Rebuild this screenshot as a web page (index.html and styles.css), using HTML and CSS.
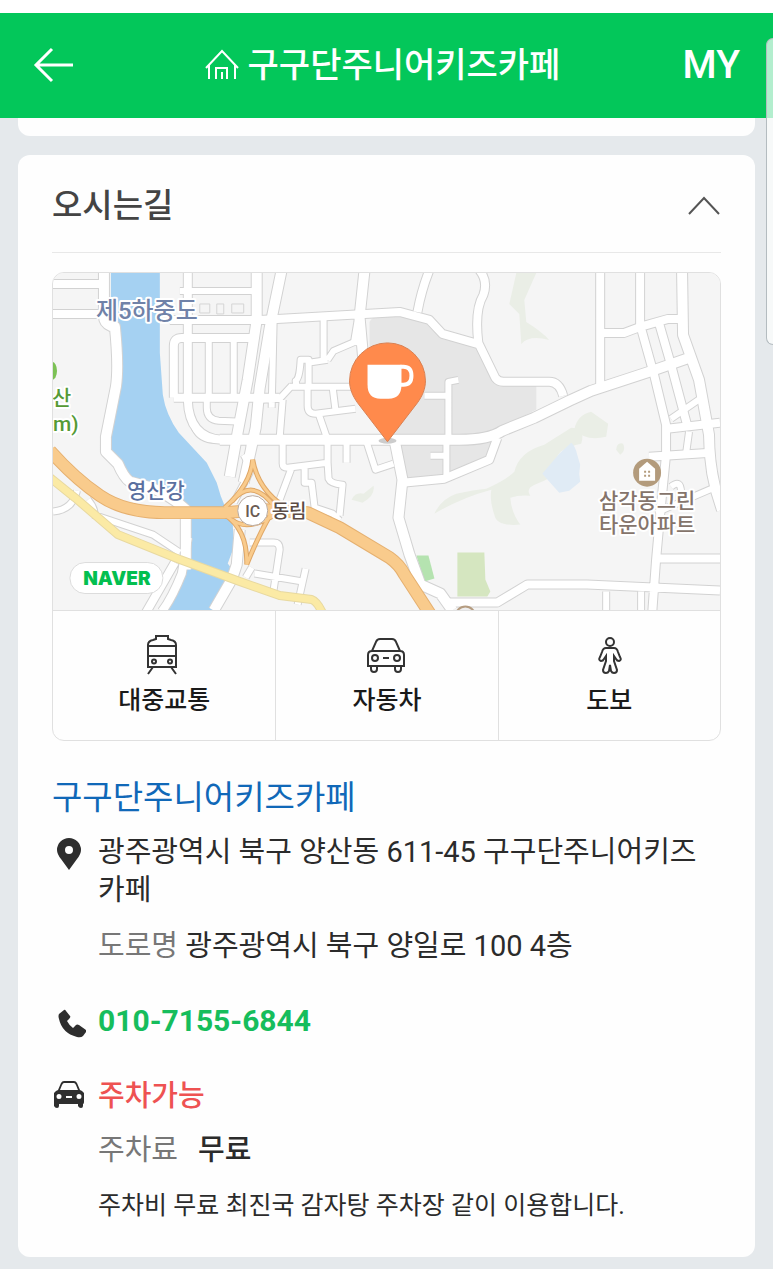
FILE: index.html
```html
<!DOCTYPE html>
<html lang="ko">
<head>
    <meta charset="UTF-8">
    <meta name="viewport" content="width=device-width, initial-scale=1.0">
    <title>구구단주니어키즈카페</title>
    <link rel="stylesheet" href="styles.css">
</head>
<body>
    <header class="top-bar">
        <button class="icon-button back-button" aria-label="뒤로">
            <svg width="42" height="38" viewBox="0 0 42 38"><path d="M19 3 3 19l16 16M3 19h37"/></svg>
        </button>
        <h1 class="top-title">
            <svg width="34" height="32" viewBox="0 0 34 32"><path d="M1 19 17 2l16 17M4 16v14M30 16v14M11 30V19h11v11M17 30v-7"/></svg>
            <span>구구단주니어키즈카페</span>
        </h1>
        <a class="my-link" href="#">MY</a>
    </header>
    <div class="edge-panel"></div>

    <main class="page">
        <section class="card card-previous"></section>

        <section class="card">
            <div class="card-head">
                <h2>오시는길</h2>
                <button class="icon-button toggle-button" aria-label="접기">
                    <svg width="34" height="20" viewBox="0 0 34 20"><path d="M2 18 17 2l15 16"/></svg>
                </button>
            </div>

            <div class="map-box">
                <svg class="map" viewBox="53 273 668 338" role="img" aria-label="지도">
                    <defs>
                        <path id="roads-small" d="M209 338v60M234 338v60M207 398v10q0 12 12 13l24 1M324 318v42M297 387l-1-6q4-2 5-21h8v28M328 360l-20 3M328 360l6-9 28-12M290 387h65M308 386v20q0 8 8 8l40-5M333 387l3 24M319 414l9 26M283 400l-3 38M262 400l18-1 12-13M425 396h24M449 440v-58l10-2M447 440v39M431 456h16M367 442l9 28 18-6M347 442v21M283 442v22q0 4 5 4l40-5v-20M292 468l-12 32M305 467v16h7l3 25 18 6 7 7M328 463l1 16q2 5 14 6l-3 31M250 543h24q6 0 6 7l-6 40M255 574l48 8M306 569l-8 36M607 592v20M642 592v20M715 488l-58 25M672 419l32-22M250 443v30l-16 30M244 455l8 15M274 320l-2 88M230 440h-12q-17 1-23-12M53 512q20-2 24-21M88 500q7 8 7 17M93 515l60 20 27 18M246 578l6-10M180 291h80M690 432l-3 22M672 487q10-8 10 6"/>
                        <path id="roads-mid" d="M53 284h50M53 314h52M174 398v-52q0-8 8-8h72M170 320h100M174 398h106M188 270v130q1 38 34 40M430 270q-8 20-12 42M260 320l70-4 70-4 30 8 13 14 35 10M480 270q9 11 4 25-9 15-5 48l17 35q3 4 8 4h46q10 0 14 14M601 270v120M641 270v57M601 333h24l16-6 28-8h15M641 325l14 50 12 50v30l-5 50-5 55-4 55M659 320l13 45 16 60M668 429l53-6M650 457l62-4M657 559h66M403 483l42-4 45-19 8-22M450 603h48l30-18h60l133 6M355 345l5-30M175 563l-30 52M188 538l-6 36q-10 25-20 38"/>
                        <path id="roads-wide" d="M104 270v46q0 7 7 10l4 1q4 40 1 60-4 20-10 50v15l12 12q6 14 12 18l22 6q22 10 34 22v60M282 270l-12 58-10 60-4 40-12 55M257 270v50l-9 60-10 52-8 45M365 270l-5 47 4 45M220 440h240q30 0 43-9l32-13 35-17 22-10 58-19 40-14M395 440l8 40-4 38 11 37 11 30 20 9 12 17M683 270l1 65 16 45 10 55q0 40 13 75M240 530l-3 35-5 15-18 31"/>
                        <path id="highway" d="M50 451q25 28 50 45t65 17h60l40-3 43 3 32 15 50 30q10 7 15 17l26 40"/>
                        <path id="ramps" d="M253 460q-2 25-28 48M253 460q5 30 33 48M247 565q1-35-22-50M247 565q12-30 25-52M232 502q20-25 42 4M232 520q15 12 42-4"/>
                    </defs>

                    <rect class="land" x="53" y="273" width="668" height="338"/>
                    <path class="campus" d="M370 322q2-5 10-6l22-3 26 8 15 18 34 7 20 35 8 4h32v25l-34 17q-5 40-58 50l-38 4-10-40-27-60z"/>
                    <g class="hill">
                        <path d="M517 273h20l-12 27 2 22q16 10 23 18-20-5-28 4l-2-30-10-10z"/>
                        <path d="M435 514q7-15 22-20 18-4 30-5 20-9 28-17 5-20 30-27l27-17q15 0 10 16-23 5-24 14 3 18-18 25-15 5-9 13-11-1-20 2 1 15 10 27-24 2-26-10-5-14-3-25-30 8-57 24z"/>
                        <path d="M575 430q3-15 17-18l17 12-2 13q-20 5-32-7zM617 450q1-8 7-6 3 7-3 11zM352 500q4-8 12-6l10-8q2 10-11 17z"/>
                    </g>
                    <path class="pond" d="M543 474l17-20 12-11q4 3 6 12l3 10-1 9 1 8-11 9-10 2z"/>
                    <path class="grass" d="M458 553h27l1 27 5 12-3 5h-30z"/>
                    <path class="grass-bright" d="M417 556h12l6 23-10 3z"/>
                    <path class="river" d="M111 273h49v80l3 42q3 20 16 38l28 30 10 20q5 20 16 40l1 25-6 16 10 13-22 34h-56q25-32 25-65v-35q-18-22-38-26l-18-8-12-16-11-10 12-55q2-35-7-73z"/>

                    <g class="casing">
                        <use href="#roads-small" class="small"/>
                        <use href="#roads-mid" class="mid"/>
                        <use href="#roads-wide" class="wide"/>
                    </g>
                    <g class="surface">
                        <use href="#roads-small" class="small"/>
                        <use href="#roads-mid" class="mid"/>
                        <use href="#roads-wide" class="wide"/>
                    </g>
                    <path class="blocks" d="M200 304h10v9h-10zM217 304h7v10h-7zM232 304h12v9h-12z"/>

                    <path class="yellow-casing" d="M50 478l25 20 43 37 62 25 60 22 40 14 32 4q6 2 12 16"/>
                    <path class="yellow" d="M50 478l25 20 43 37 62 25 60 22 40 14 32 4q6 2 12 16"/>
                    <use href="#ramps" class="ramp-casing"/>
                    <use href="#highway" class="highway-casing"/>
                    <use href="#ramps" class="ramp"/>
                    <use href="#highway" class="highway"/>
                    <circle class="exit-mark" cx="466" cy="617" r="10"/>

                    <text class="place river-name large" x="96" y="319">제5하중도</text>
                    <text class="place river-name" x="127" y="498">영산강</text>
                    <ellipse class="spot" cx="52" cy="371" rx="5" ry="9"/>
                    <text class="place park-name" x="52" y="405">산</text>
                    <text class="place park-name" x="53" y="431">m)</text>

                    <circle class="ic-badge" cx="253" cy="511" r="15"/>
                    <text class="ic-text" x="253" y="517" text-anchor="middle">IC</text>
                    <text class="place ic-name" x="272" y="518">동림</text>

                    <circle class="apt-badge" cx="648" cy="473" r="14"/>
                    <path class="apt-house" d="M640 481v-12l8-7 8 7v12z"/>
                    <path class="apt-window" d="M645 471h2v2h-2zM649 471h2v2h-2zM645 475h2v2h-2zM649 475h2v2h-2z"/>
                    <text class="place apt-name" x="648" y="508" text-anchor="middle">삼각동그린</text>
                    <text class="place apt-name" x="648" y="532" text-anchor="middle">타운아파트</text>

                    <ellipse class="pin-shadow" cx="388" cy="441" rx="9" ry="3"/>
                    <path class="pin" d="M388 442l-30-39c-5-7-8-14-8-22a38 38 0 0 1 76 0c0 8-3 15-8 22z"/>
                    <path class="cup" d="M368 365h34v20q0 14-13 14h-8q-13 0-13-14z"/>
                    <path class="cup-handle" d="M401 367h3q8 0 8 9t-8 9h-3"/>

                    <rect class="naver-pill" x="70" y="563" width="93" height="31" rx="15"/>
                    <text class="naver-text" x="117" y="585" text-anchor="middle">NAVER</text>
                </svg>

                <div class="routes">
                    <button class="route">
                        <svg width="40" height="40" viewBox="2 0 40 40"><path d="M6 32V10q0-4 5-5l3-1V1h12v3l3 1q5 1 5 5v22zM6 11h28M6 21h28M11 32l-5 7M29 32l5 7"/><circle cx="12" cy="26.500" r="2"/><circle cx="28" cy="26.500" r="2"/></svg>
                        <span>대중교통</span>
                    </button>
                    <button class="route">
                        <svg width="40" height="40" viewBox="1 0 40 40"><path d="M2 31V20q0-4 4-4l4-9q1-3 4-3h12q3 0 4 3l4 9q4 0 4 4v11zM6 16h28M5 31v3q0 3 3 3t3-3v-3M29 31v3q0 3 3 3t3-3v-3M17 23h6"/><circle cx="9" cy="23" r="3"/><circle cx="31" cy="23" r="3"/></svg>
                        <span>자동차</span>
                    </button>
                    <button class="route">
                        <svg width="40" height="40" viewBox="-1 0 40 40"><circle cx="20" cy="7" r="4"/><path d="M16 13h8q3 0 4 4l2 5q2 3-1 4-2 0-3-2l-2-3v5l3 9q0 3-3 3-2 0-3-2l-1-6-1 6q-1 2-3 2-3 0-3-3l3-9v-5l-2 3q-1 2-3 2-3-1-1-4l2-5q1-4 4-4z"/></svg>
                        <span>도보</span>
                    </button>
                </div>
            </div>

            <h3 class="place-title"><a href="#">구구단주니어키즈카페</a></h3>

            <div class="info-row">
                <svg class="info-icon" width="34" height="38" viewBox="0 0 34 38"><path fill-rule="evenodd" d="M17 37 9 26q-4-5-4-9a12 12 0 0 1 24 0q0 4-4 9zM17 13a4 4 0 1 0 0 8 4 4 0 0 0 0-8z"/></svg>
                <div>
                    <p>광주광역시 북구 양산동 611-45 구구단주니어키즈카페</p>
                    <p class="road-address"><span class="label">도로명</span> 광주광역시 북구 양일로 100 4층</p>
                </div>
            </div>

            <div class="info-row">
                <svg class="info-icon" width="34" height="38" viewBox="0 0 34 38"><path d="M7 12l5-4q1-1 2 1l4 5q1 1-1 3l-2 2q2 4 6 7l3-3q1-1 3 0l7 5q1 1 0 2l-3 4q-2 2-6 1Q10 31 7 17q-1-3 0-5z"/></svg>
                <a class="phone" href="tel:010-7155-6844">010-7155-6844</a>
            </div>

            <div class="info-row">
                <svg class="info-icon" width="34" height="38" viewBox="0 0 34 38"><path fill-rule="evenodd" d="M2 16l2-2 2-1 3-7q1-2 3-2h10q2 0 3 2l3 7 2 1 2 2v9q0 2-1 2v2q0 2-2 2t-3-2v-2H7v2q0 2-2 2t-3-2v-2q0 0 0-2zM8 13h18l-2-5q-1-2-2-2H12q-1 0-2 2zM7 17a2 2 0 1 0 0 5 2 2 0 0 0 0-5zM27 17a2 2 0 1 0 0 5 2 2 0 0 0 0-5zM14 19v2h6v-2z"/></svg>
                <div>
                    <p class="parking">주차가능</p>
                    <p class="fee"><span class="label">주차료</span><span class="fee-value">무료</span></p>
                    <p class="note">주차비 무료 최진국 감자탕 주차장 같이 이용합니다.</p>
                </div>
            </div>
        </section>
    </main>
</body>
</html>
```
FILE: styles.css
```css
* {
    box-sizing: border-box;
}
body {
    margin: 0;
    padding-top: 13px;
    background-color: #fff;
    color: #2b2b2b;
    font-family: Roboto, "Noto Sans CJK KR", sans-serif;
    font-size: 29px;
    line-height: 38px;
}
h1, h2, h3, p {
    margin: 0;
}
a {
    color: inherit;
    text-decoration: none;
}
button {
    border: none;
    background: none;
    padding: 0;
    color: inherit;
    font-family: inherit;
    cursor: pointer;
}
svg {
    display: block;
}

/* header */
.top-bar {
    display: grid;
    grid-template-columns: 1fr auto 1fr;
    align-items: center;
    height: 105px;
    padding: 0 33px 2px;
    background-color: #03c75a;
    color: #fff;
}
.top-bar path {
    fill: none;
    stroke: #fff;
    stroke-width: 3;
}
.icon-button {
    justify-self: start;
}
.top-title {
    display: flex;
    align-items: center;
    gap: 9px;
    padding-right: 8px;
    font-size: 34px;
    font-weight: 500;
}
.top-title path {
    stroke-width: 2;
}
.my-link {
    justify-self: end;
    font-size: 39px;
    font-weight: 500;
}
.edge-panel {
    position: absolute;
    top: 38px;
    right: 0;
    width: 7px;
    height: 307px;
    border: 1px solid #b4bcc0;
    border-right: none;
    border-radius: 8px 0 0 8px;
    background-color: rgba(255, 255, 255, 0.7);
}

/* cards */
.page {
    padding: 0 18px 13px;
    background-color: #e5e9ec;
}
.card {
    padding: 0 34px 32px;
    border-radius: 12px;
    background-color: #fefefe;
}
.card-previous {
    height: 18px;
    margin-bottom: 19px;
    padding: 0;
    border-radius: 0 0 12px 12px;
}
.card-head {
    display: flex;
    justify-content: space-between;
    align-items: center;
    padding: 32px 0 27px;
    border-bottom: 1px solid #e8e8e8;
}
.card-head h2 {
    color: #444;
    font-size: 33px;
    font-weight: 500;
}
.toggle-button path {
    fill: none;
    stroke: #555;
    stroke-width: 2;
}

/* map */
.map-box {
    margin-top: 19px;
    border: 1px solid #e0e0e0;
    border-radius: 12px;
    overflow: hidden;
}
.map {
    width: 100%;
    height: auto;
}
.land { fill: #f5f5f5; }
.campus { fill: #e6e6e6; }
.hill { fill: #eaeee6; }
.pond { fill: #e0ebf5; }
.grass { fill: #d5e6c0; }
.grass-bright { fill: #b5e3b0; }
.river { fill: #a5d1f2; }
.casing, .surface {
    fill: none;
    stroke-linejoin: round;
}
.casing { stroke: #d2d2d2; }
.surface { stroke: #fff; }
.casing .small { stroke-width: 8; }
.surface .small { stroke-width: 6; }
.casing .mid { stroke-width: 10; }
.surface .mid { stroke-width: 8; }
.casing .wide { stroke-width: 12; }
.surface .wide { stroke-width: 10; }
.blocks {
    fill: #f5f5f5;
    stroke: #d5d5d5;
}
.yellow-casing, .yellow, .highway-casing, .highway, .ramp-casing, .ramp {
    fill: none;
    stroke-linejoin: round;
}
.yellow-casing { stroke: #e8d9a0; stroke-width: 9; }
.yellow { stroke: #fbeaa5; stroke-width: 7; }
.highway-casing { stroke: #e5b070; stroke-width: 13; }
.highway { stroke: #f9cb8c; stroke-width: 11; }
.ramp-casing { stroke: #dfa767; stroke-width: 5; }
.ramp { stroke: #f9cb8c; stroke-width: 3; }
.exit-mark {
    fill: #eee;
    stroke: #b59c80;
    stroke-width: 2;
}
.place {
    font-size: 21px;
    font-weight: 500;
    stroke: #fff;
    stroke-width: 4px;
    stroke-linejoin: round;
    paint-order: stroke;
}
.river-name { fill: #5a6f9f; }
.large { font-size: 24px; fill: #7082a8; }
.park-name { fill: #559a35; }
.spot { fill: #7cc155; }
.ic-badge {
    fill: #fff;
    stroke: #b9aaa0;
}
.ic-text {
    fill: #6b5b53;
    font-size: 16px;
    font-weight: 500;
}
.ic-name { font-size: 19px; fill: #5d4c45; }
.apt-badge { fill: #b39b7c; }
.apt-house { fill: #fff; }
.apt-window { fill: #b39b7c; }
.apt-name { fill: #85746b; }
.pin-shadow { fill: rgba(0, 0, 0, 0.2); }
.pin {
    fill: #ff8a4c;
    stroke: #d97f50;
}
.cup { fill: #fff; }
.cup-handle {
    fill: none;
    stroke: #fff;
    stroke-width: 4;
}
.naver-pill {
    fill: #fff;
    stroke: #dcdcdc;
}
.naver-text {
    fill: #03bf50;
    font-family: Inter, sans-serif;
    font-size: 19px;
    font-weight: 900;
}

.routes {
    display: grid;
    grid-template-columns: repeat(3, 1fr);
    border-top: 1px solid #e0e0e0;
}
.route {
    display: flex;
    flex-direction: column;
    align-items: center;
    gap: 7px;
    padding: 24px 0 20px;
    color: #1a1a1a;
    font-size: 25px;
    font-weight: 500;
    line-height: 38px;
}
.route + .route {
    border-left: 1px solid #e0e0e0;
}
.route svg {
    fill: none;
    stroke: #333;
    stroke-width: 2;
}

/* place details */
.place-title {
    margin: 35px 0 13px;
    color: #1068b8;
    font-size: 33px;
    font-weight: 400;
    line-height: 44px;
}
.info-row {
    display: grid;
    grid-template-columns: 34px 1fr;
    column-gap: 12px;
    margin-bottom: 37px;
}
.info-row:last-child {
    margin-bottom: 0;
}
.info-icon {
    fill: #2e2e2e;
}
.label {
    color: #777;
}
.road-address {
    margin-top: 18px;
}
.phone {
    color: #16bd5c;
    font-size: 30px;
    font-weight: 700;
}
.parking {
    color: #ee5252;
    font-weight: 500;
}
.fee {
    display: flex;
    gap: 20px;
    margin-top: 16px;
}
.fee-value {
    font-weight: 500;
}
.note {
    margin-top: 18px;
    font-size: 25px;
}
```
